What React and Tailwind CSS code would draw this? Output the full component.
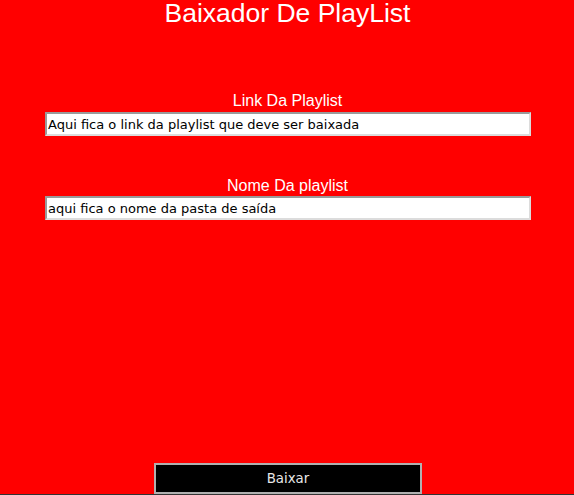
import { useState } from 'react';

export default function App() {
  const [link, setLink] = useState('Aqui fica o link da playlist que deve ser baixada');
  const [nome, setNome] = useState('aqui fica o nome da pasta de saída');

  return (
    <div className="h-[495px] w-full bg-[#333333]">
      <div className="flex h-[494px] flex-col items-center bg-[#ff0000] font-['Liberation_Sans',Arial,sans-serif] text-white">
        <h1 className="pl-[1px] text-[26.5px] leading-[26px]">Baixador De PlayList</h1>

        <label className="mt-[65px] pl-[1px] text-[16px] leading-[20px]">Link Da Playlist</label>
        <input
          value={link}
          onChange={(e) => setLink(e.target.value)}
          className="ml-[2px] mt-[1px] h-[24px] w-[486px] border-2 border-t-[#9a9a9a] border-l-[#9a9a9a] border-r-[#dcdcdc] border-b-[#dcdcdc] bg-white px-[1px] font-['DejaVu_Sans',sans-serif] text-[13px] text-black outline-none"
        />

        <label className="mt-[40px] pl-[1px] text-[16px] leading-[20px]">Nome Da playlist</label>
        <input
          value={nome}
          onChange={(e) => setNome(e.target.value)}
          className="ml-[2px] h-[24px] w-[486px] border-2 border-t-[#9a9a9a] border-l-[#9a9a9a] border-r-[#dcdcdc] border-b-[#dcdcdc] bg-white px-[1px] font-['DejaVu_Sans',sans-serif] text-[13px] text-black outline-none"
        />

        <button className="ml-[2px] mt-auto h-[31px] w-[268px] border-2 border-[#b0b0b0] bg-black font-['DejaVu_Sans',sans-serif] text-[13.333px] text-[#e8e8e8]">
          Baixar
        </button>
      </div>
    </div>
  );
}
